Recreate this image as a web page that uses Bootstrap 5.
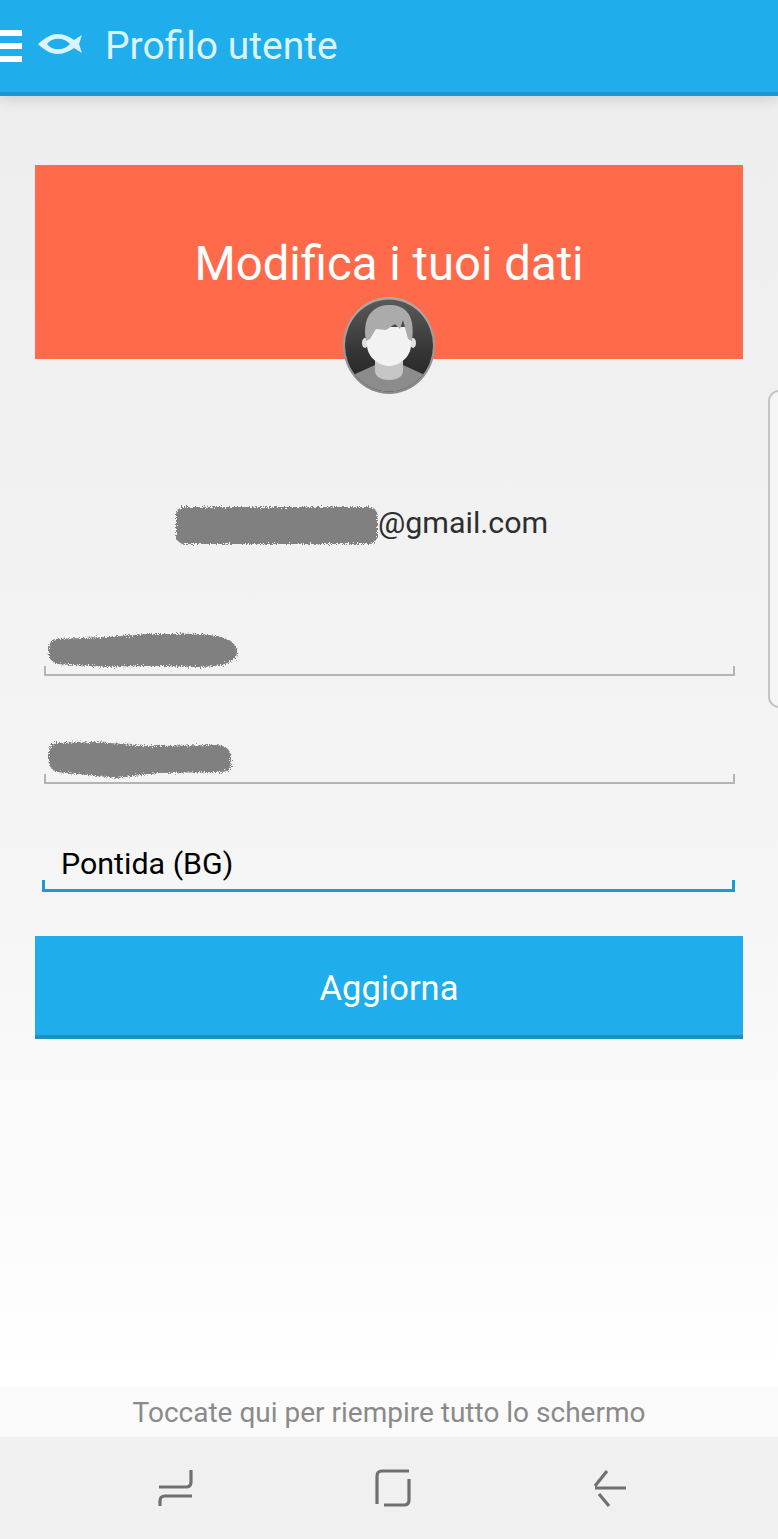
<!DOCTYPE html>
<html lang="it">
<head>
<meta charset="utf-8">
<title>Profilo utente</title>
<link href="https://cdn.jsdelivr.net/npm/bootstrap@5.3.0/dist/css/bootstrap.min.css" rel="stylesheet">
<style>
html,body{margin:0;height:1539px;overflow:hidden}
body{font-family:Roboto,"Liberation Sans",sans-serif;position:relative;background:#fff}
.app-top{height:96px;background:#20adec;border-bottom:4px solid #1e95cc;box-shadow:0 2px 14px rgba(0,0,0,.16);position:relative;z-index:2;color:#daf4ff;padding-bottom:1px}
.burger{width:22px;gap:7px;margin-right:16px}
.burger span{display:block;height:6px;background:#fff}
.fish{width:46px;height:22px;margin-right:21px;margin-top:-4px}
.app-title{font-size:39px;line-height:1;margin:2px 0 0;font-weight:400}
.app-main{background:linear-gradient(#eeeeee 0,#f4f4f4 55%,#ffffff 100%);padding:69px 35px 0;height:1291px}
.hero{height:194px;background:#ff6a4a;color:#fff;position:relative}
.hero-title{font-size:47.3px;line-height:1;font-weight:400;margin:0;padding-top:76px}
.avatar{position:absolute;left:308px;top:132px;width:92px;height:97px}
.mail-row{margin-top:143px;height:42px;font-size:30.4px;line-height:42px;color:#2e2e2e;padding-left:137px}
.blot{display:block;flex:none}
.field{width:auto;height:44px;margin:0 8px 0 9px;position:relative;background:transparent;border:0;border-bottom:2px solid #b4b4b4;border-radius:0;padding:0 0 0 3px;box-shadow:none}
.field::before,.field::after{content:"";position:absolute;bottom:0;width:2px;height:8px;background:#b4b4b4}
.field::before{left:0}.field::after{right:0}
.field-a{margin-top:88px}
.field-b{margin-top:64px}
.field-c{margin-top:62px;margin-left:7px;height:46px;border-bottom:3px solid #189dd2;font-size:30.4px;line-height:36px;color:#000;padding-left:19px}
.field-c::before,.field-c::after{background:#189dd2;width:3px;height:9px}
.go{display:block;width:100%;height:103px;margin-top:44px;background:#20adec;border:0;border-bottom:4px solid #1e8fc2;border-radius:0;color:#fff;font-size:34.5px;line-height:1;padding:6px 0 0}
.hint{height:50px;background:linear-gradient(#fafafa,#fbfbfb);color:#8a8a8a;font-size:28px;line-height:52px}
.sys-nav{height:103px;background:#f0f0f0;padding:0 150px 0 158px}
.sys-nav svg{display:block;margin-top:-2px}
.handle{position:absolute;right:-12px;top:390px;width:22px;height:318px;border:2px solid #c4c4c4;border-radius:12px;background:#f5f5f5;z-index:3}
</style>
</head>
<body>
<svg width="0" height="0" class="position-absolute"><defs><filter id="rough" x="-5%" y="-15%" width="110%" height="130%"><feTurbulence type="fractalNoise" baseFrequency=".75" numOctaves="2" seed="4"/><feDisplacementMap in="SourceGraphic" scale="7"/></filter></defs></svg>

<header class="app-top d-flex align-items-center">
  <div class="burger d-flex flex-column"><span></span><span></span><span></span></div>
  <svg class="fish" viewBox="0 0 46 22" aria-hidden="true"><path fill-rule="evenodd" d="M0 11C8 4 14 1 19 1C26 1 32 4 36 7L44 2L41 11L44 20L36 15C30 19 25 21 19 21C13 21 6 17 0 11ZM9 11C14 4 26 4 32 11C26 18 14 18 9 11Z" fill="#daf4ff"/></svg>
  <h1 class="app-title">Profilo utente</h1>
</header>

<main class="app-main">
  <section class="hero text-center">
    <h2 class="hero-title">Modifica i tuoi dati</h2>
    <svg class="avatar" viewBox="0 0 92 97" aria-hidden="true">
      <defs>
        <linearGradient id="av" x1="0" y1="0" x2="0" y2="1"><stop offset="0" stop-color="#5a5a5a"/><stop offset=".6" stop-color="#333"/><stop offset="1" stop-color="#222"/></linearGradient>
        <linearGradient id="rim" x1="0" y1="0" x2="0" y2="1"><stop offset="0" stop-color="#b0aaa6"/><stop offset="1" stop-color="#8a8a8a"/></linearGradient>
        <clipPath id="cc"><ellipse cx="46" cy="48.5" rx="44" ry="46"/></clipPath>
      </defs>
      <ellipse cx="46" cy="48.5" rx="46" ry="48.5" fill="url(#rim)"/>
      <ellipse cx="46" cy="48.5" rx="44" ry="46" fill="url(#av)"/>
      <g clip-path="url(#cc)">
        <path d="M8 79L32 68H60L84 79V97H8Z" fill="#8c8c8c"/>
        <path d="M32 60H60V74C60 86 32 86 32 74Z" fill="#c6c6c6"/>
        <ellipse cx="22" cy="46" rx="3" ry="5" fill="#e0e0e0"/>
        <ellipse cx="70" cy="46" rx="3" ry="5" fill="#e0e0e0"/>
        <path d="M24 30H68V48C68 60 56 69 46 69C36 69 24 60 24 48Z" fill="#f2f2f2"/>
        <path d="M23 44C18 15 35 8 46 8C60 8 73 15 69 44L65 42L60 23L57 32L52 27L43 33L33 32L27 42Z" fill="#ababab"/>
      </g>
    </svg>
  </section>

  <div class="mail-row d-flex">
    <svg class="blot" width="206" height="46" viewBox="0 0 206 46" aria-hidden="true"><rect x="4" y="5" width="201" height="37" rx="8" fill="#808080" filter="url(#rough)"/></svg><span>@gmail.com</span>
  </div>

  <div class="field field-a form-control"><svg class="blot" width="194" height="40" viewBox="0 0 194 40" aria-hidden="true"><path d="M8 7L60 5 100 2H130Q190 0 190 20 190 35 150 35 100 33 60 35L10 32Q0 28 2 18 2 8 8 7Z" fill="#808080" filter="url(#rough)"/></svg></div>
  <div class="field field-b form-control"><svg class="blot" width="194" height="40" viewBox="0 0 194 40" aria-hidden="true"><path d="M10 3L50 2 100 6 170 5Q184 6 184 18V26Q184 32 170 32L110 33 70 38 10 32Q2 30 2 20V10Q3 4 10 3Z" fill="#808080" filter="url(#rough)"/></svg></div>
  <div class="field field-c form-control">Pontida (BG)</div>

  <button type="button" class="go btn">Aggiorna</button>
</main>

<div class="hint text-center">Toccate qui per riempire tutto lo schermo</div>
<nav class="sys-nav d-flex align-items-center justify-content-between">
  <svg width="36" height="40" viewBox="0 0 36 40" aria-hidden="true"><path d="M1 19H28Q33 19 33 14V2M34 28H7Q2 28 2 33V38" fill="none" stroke="#707070" stroke-width="3.2"/></svg>
  <svg width="38" height="40" viewBox="0 0 38 40" aria-hidden="true"><path d="M35 3H8Q3 3 3 8V36M35 11V32Q35 37 30 37H10" fill="none" stroke="#707070" stroke-width="3.2"/></svg>
  <svg width="36" height="40" viewBox="0 0 36 40" aria-hidden="true"><path d="M34 20H3M15 3L3 18M7 26L17 38" fill="none" stroke="#707070" stroke-width="3.2"/></svg>
</nav>
<div class="handle"></div>
<script src="https://cdn.jsdelivr.net/npm/bootstrap@5.3.0/dist/js/bootstrap.bundle.min.js"></script>
</body>
</html>
